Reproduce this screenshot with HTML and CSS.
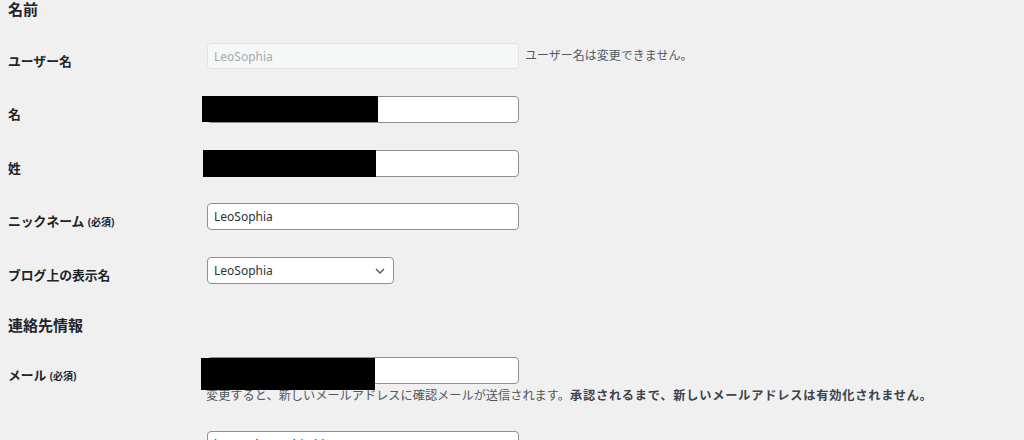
FILE: index.html
```html
<!DOCTYPE html>
<html lang="ja">
<head>
<meta charset="utf-8">
<title>プロフィール</title>
<link rel="stylesheet" href="styles.css">
</head>
<body>
<main class="page">
  <h2 class="section-title">名前</h2>
  <div class="form-table">
    <div class="row">
      <div class="label">ユーザー名</div>
      <div class="field inline">
        <input class="text-input disabled" type="text" value="LeoSophia" disabled>
        <span class="desc">ユーザー名は変更できません。</span>
      </div>
    </div>
    <div class="row">
      <div class="label">名</div>
      <div class="field">
        <div class="input-wrap">
          <input class="text-input" type="text" value="">
          <span class="redact redact-first"></span>
        </div>
      </div>
    </div>
    <div class="row">
      <div class="label">姓</div>
      <div class="field">
        <div class="input-wrap">
          <input class="text-input" type="text" value="">
          <span class="redact redact-last"></span>
        </div>
      </div>
    </div>
    <div class="row">
      <div class="label">ニックネーム <span class="req">(必須)</span></div>
      <div class="field">
        <input class="text-input" type="text" value="LeoSophia">
      </div>
    </div>
    <div class="row">
      <div class="label">ブログ上の表示名</div>
      <div class="field">
        <div class="select">
          <span class="select-value">LeoSophia</span>
          <svg class="chevron" width="10" height="6" viewBox="0 0 10 6" aria-hidden="true"><path d="M1 1 L5 5 L9 1" fill="none" stroke="#50575e" stroke-width="1.4"/></svg>
        </div>
      </div>
    </div>
  </div>

  <h2 class="section-title second">連絡先情報</h2>
  <div class="form-table">
    <div class="row">
      <div class="label">メール <span class="req">(必須)</span></div>
      <div class="field">
        <div class="input-wrap">
          <input class="text-input" type="text" value="">
          <span class="redact redact-mail"></span>
        </div>
        <p class="desc block">変更すると、新しいメールアドレスに確認メールが送信されます。<strong>承認されるまで、新しいメールアドレスは有効化されません。</strong></p>
      </div>
    </div>
    <div class="row">
      <div class="label"></div>
      <div class="field">
        <input class="text-input" type="text" value="https://leosophia-blog.com/">
      </div>
    </div>
  </div>
</main>
</body>
</html>
```

FILE: styles.css
```css
html, body {
  margin: 0;
  padding: 0;
  background: #f0f0f1;
  overflow: hidden;
}

body {
  font-family: "Noto Sans", "Noto Sans CJK JP", sans-serif;
  color: #1d2327;
}

.page {
  padding-left: 8px;
}

.section-title {
  margin: 0 0 12px;
  font-size: 15px;
  line-height: 18px;
  font-weight: 700;
  color: #1d2327;
}

.section-title.second {
  margin-top: 18px;
  margin-bottom: 10px;
}

.row {
  display: grid;
  grid-template-columns: 199px 1fr;
}

.label {
  padding-top: 23px;
  font-size: 12.8px;
  line-height: 16px;
  font-weight: 700;
  color: #1d2327;
  white-space: nowrap;
}

.req {
  font-size: 10px;
  font-weight: 700;
}

.field {
  padding-top: 13px;
  padding-bottom: 13.8px;
}

.field.inline {
  display: flex;
  align-items: center;
  gap: 6px;
}

.input-wrap {
  position: relative;
  width: 312px;
  height: 27px;
}

.text-input {
  box-sizing: border-box;
  display: block;
  width: 312px;
  height: 27px;
  margin: 0;
  padding: 0 6px;
  border: 1px solid #8c8f94;
  border-radius: 4px;
  background: #fff;
  font-family: "Noto Sans", "Noto Sans CJK JP", sans-serif;
  font-size: 12px;
  color: #2c3338;
  outline: none;
}

.text-input.disabled {
  height: 26px;
  background: #f6f7f7;
  border-color: #e2e4e7;
  color: #a7aaad;
}

.redact {
  position: absolute;
  background: #000;
}

.redact-first {
  left: -5px;
  top: 0;
  width: 176px;
  height: 26px;
}

.redact-last {
  left: -4px;
  top: 0;
  width: 173px;
  height: 27px;
}

.redact-mail {
  left: -6px;
  top: 1px;
  width: 174px;
  height: 32px;
}

.desc {
  font-size: 12px;
  line-height: 16px;
  color: #50575e;
  white-space: nowrap;
}

.desc.block {
  margin: 4px 0 0 -1px;
  font-size: 12.2px;
}

.desc strong {
  font-weight: 700;
  color: #3c434a;
  letter-spacing: 0.8px;
}

.select {
  box-sizing: border-box;
  width: 187px;
  height: 27px;
  display: flex;
  align-items: center;
  justify-content: space-between;
  padding: 0 8px 0 6px;
  border: 1px solid #8c8f94;
  border-radius: 4px;
  background: #fff;
}

.select-value {
  font-size: 12px;
  color: #2c3338;
}

.chevron {
  display: block;
}
```
